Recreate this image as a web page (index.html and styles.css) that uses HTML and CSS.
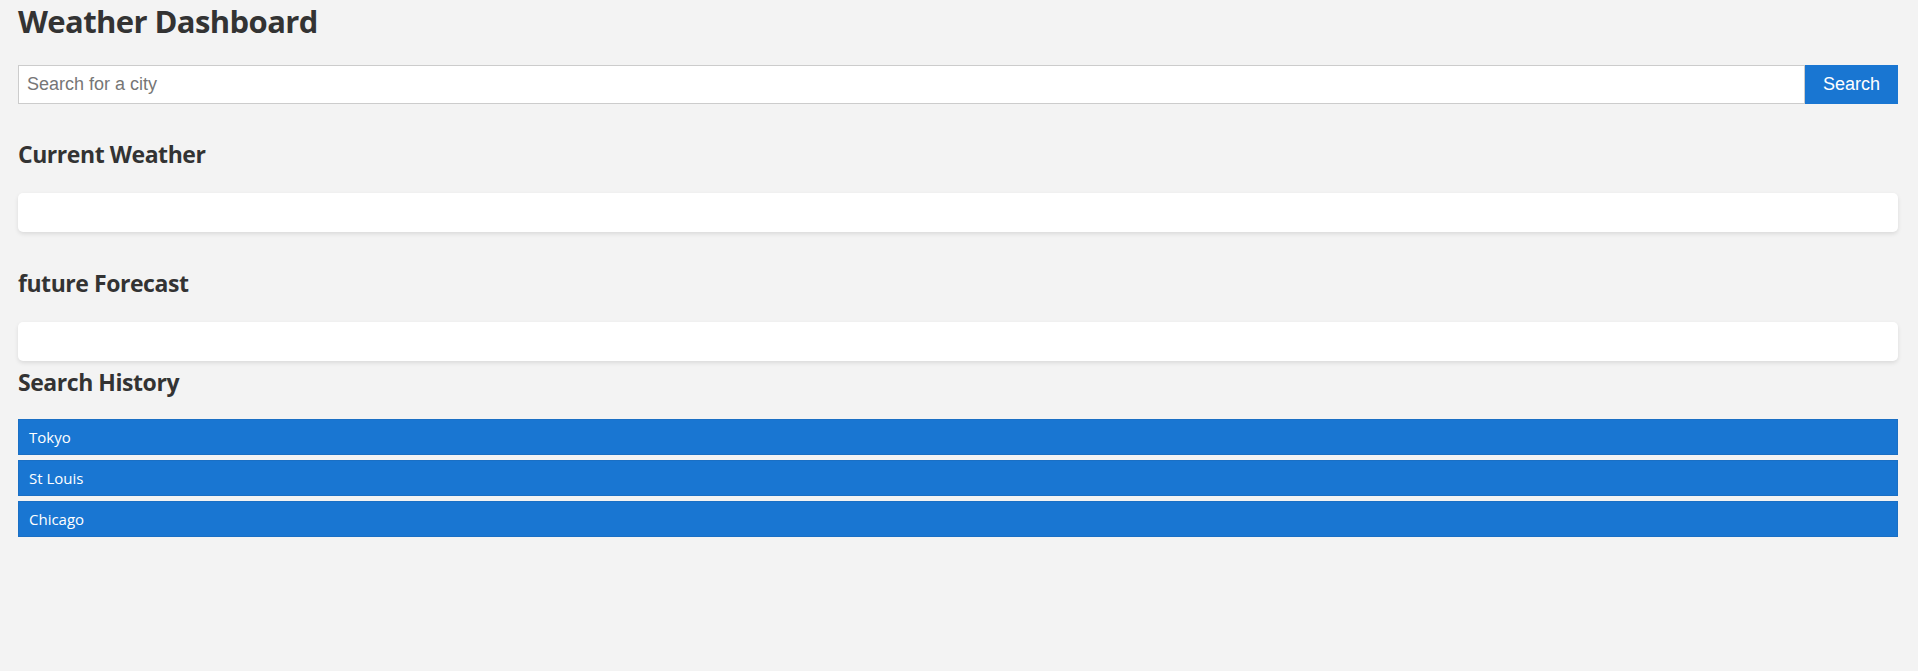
FILE: index.html
```html
<!DOCTYPE html>
<html lang="en">
<head>
<meta charset="utf-8">
<title>Weather Dashboard</title>
<link rel="stylesheet" href="styles.css">
</head>
<body>
  <header class="page-header">
    <h1 class="title">Weather Dashboard</h1>
  </header>
  <form class="search-form" onsubmit="return false;">
    <input class="search-input" type="text" placeholder="Search for a city">
    <button class="search-button" type="submit">Search</button>
  </form>
  <section class="section section-current">
    <h2 class="section-title">Current Weather</h2>
    <div class="card"></div>
  </section>
  <section class="section section-forecast">
    <h2 class="section-title">future Forecast</h2>
    <div class="card"></div>
  </section>
  <section class="section section-history">
    <h2 class="section-title">Search History</h2>
    <div class="history-list">
      <button class="history-item" type="button">Tokyo</button>
      <button class="history-item" type="button">St Louis</button>
      <button class="history-item" type="button">Chicago</button>
    </div>
  </section>
</body>
</html>
```
FILE: styles.css
```css
html, body {
  background: #f3f3f3;
}
body {
  margin: 0;
  padding: 1px 20px 0 18px;
  font-family: "Open Sans", "Noto Sans", sans-serif;
  color: #333;
}
.title {
  margin: 0;
  font-size: 31px;
  line-height: 40px;
  font-weight: 700;
  letter-spacing: -0.6px;
}
.search-form {
  display: flex;
  margin-top: 24px;
}
.search-input {
  flex: 1;
  box-sizing: border-box;
  height: 39px;
  margin: 0;
  padding: 0 8px;
  border: 1px solid #ccc;
  border-radius: 0;
  background: #fff;
  font-family: "Liberation Sans", Arial, sans-serif;
  font-size: 18px;
  color: #333;
  outline: none;
}
.search-input::placeholder {
  color: #767676;
}
.search-button {
  box-sizing: border-box;
  height: 39px;
  width: 93px;
  margin: 0;
  padding: 0;
  border: none;
  border-radius: 0;
  background: #1976d2;
  color: #fff;
  font-family: "Liberation Sans", Arial, sans-serif;
  font-size: 18px;
  cursor: pointer;
}
.section-title {
  margin: 0 0 24px;
  font-size: 23px;
  line-height: 30px;
  font-weight: 700;
  letter-spacing: -0.45px;
}
.section-current {
  margin-top: 35px;
}
.section-forecast {
  margin-top: 36px;
}
.section-history {
  margin-top: 6px;
}
.section-history .section-title {
  margin-bottom: 22px;
}
.card {
  height: 39px;
  background: #fff;
  border-radius: 5px;
  box-shadow: 0 2px 4px rgba(0, 0, 0, 0.1);
}
.history-list {
  display: flex;
  flex-direction: column;
  gap: 5px;
}
.history-item {
  box-sizing: border-box;
  height: 36px;
  margin: 0;
  padding: 0 10px;
  border: 1px solid #1a6fc4;
  border-radius: 0;
  background: #1976d2;
  color: #fff;
  font-family: "Open Sans", "Noto Sans", sans-serif;
  font-size: 15px;
  text-align: left;
  cursor: pointer;
}
```
